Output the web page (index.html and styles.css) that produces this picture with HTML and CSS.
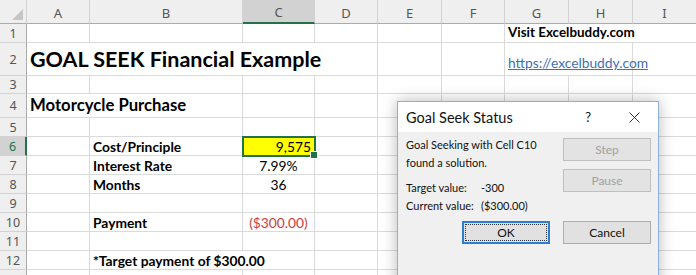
FILE: index.html
```html
<!DOCTYPE html>
<html lang="en">
  <head>
    <meta charset="UTF-8" />
    <title>Goal Seek Financial Example</title>
    <link rel="stylesheet" href="styles.css">
  </head>
  <body>
    <!-- Worksheet -->
    <div class="sheet">
      <!-- column headers -->
      <div class="hd corner"><span class="tri"></span></div>
      <div class="hd">A</div><div class="hd">B</div><div class="hd col-sel">C</div><div class="hd">D</div>
      <div class="hd">E</div><div class="hd">F</div><div class="hd">G</div><div class="hd">H</div><div class="hd">I</div>

      <!-- row 1 -->
      <div class="rn">1</div>
      <div class="cell"></div><div class="cell"></div><div class="cell"></div><div class="cell"></div><div class="cell"></div><div class="cell"></div>
      <div class="cell span3 bold visit">Visit Excelbuddy.com</div>

      <!-- row 2 -->
      <div class="rn">2</div>
      <div class="cell span4 title">GOAL SEEK Financial Example</div>
      <div class="cell"></div><div class="cell"></div>
      <div class="cell span2 link"><a href="#">https://excelbuddy.com</a></div>
      <div class="cell"></div>

      <!-- row 3 -->
      <div class="rn">3</div>
      <div class="cell"></div><div class="cell"></div><div class="cell"></div><div class="cell"></div><div class="cell"></div>
      <div class="cell"></div><div class="cell"></div><div class="cell"></div><div class="cell"></div>

      <!-- row 4 -->
      <div class="rn">4</div>
      <div class="cell span2 subtitle">Motorcycle Purchase</div>
      <div class="cell"></div><div class="cell"></div><div class="cell"></div><div class="cell"></div>
      <div class="cell"></div><div class="cell"></div><div class="cell"></div>

      <!-- row 5 -->
      <div class="rn">5</div>
      <div class="cell"></div><div class="cell"></div><div class="cell"></div><div class="cell"></div><div class="cell"></div>
      <div class="cell"></div><div class="cell"></div><div class="cell"></div><div class="cell"></div>

      <!-- row 6 -->
      <div class="rn row-sel">6</div>
      <div class="cell"></div><div class="cell bold">Cost/Principle</div><div class="cell num active">9,575</div>
      <div class="cell"></div><div class="cell"></div><div class="cell"></div><div class="cell"></div><div class="cell"></div><div class="cell"></div>

      <!-- row 7 -->
      <div class="rn">7</div>
      <div class="cell"></div><div class="cell bold">Interest Rate</div><div class="cell mid">7.99%</div>
      <div class="cell"></div><div class="cell"></div><div class="cell"></div><div class="cell"></div><div class="cell"></div><div class="cell"></div>

      <!-- row 8 -->
      <div class="rn">8</div>
      <div class="cell"></div><div class="cell bold">Months</div><div class="cell mid">36</div>
      <div class="cell"></div><div class="cell"></div><div class="cell"></div><div class="cell"></div><div class="cell"></div><div class="cell"></div>

      <!-- row 9 -->
      <div class="rn">9</div>
      <div class="cell"></div><div class="cell"></div><div class="cell"></div><div class="cell"></div><div class="cell"></div>
      <div class="cell"></div><div class="cell"></div><div class="cell"></div><div class="cell"></div>

      <!-- row 10 -->
      <div class="rn">10</div>
      <div class="cell"></div><div class="cell bold">Payment</div><div class="cell mid neg">($300.00)</div>
      <div class="cell"></div><div class="cell"></div><div class="cell"></div><div class="cell"></div><div class="cell"></div><div class="cell"></div>

      <!-- row 11 -->
      <div class="rn">11</div>
      <div class="cell"></div><div class="cell"></div><div class="cell"></div><div class="cell"></div><div class="cell"></div>
      <div class="cell"></div><div class="cell"></div><div class="cell"></div><div class="cell"></div>

      <!-- row 12 -->
      <div class="rn">12</div>
      <div class="cell"></div><div class="cell span2 bold">*Target payment of $300.00</div>
      <div class="cell"></div><div class="cell"></div><div class="cell"></div><div class="cell"></div><div class="cell"></div><div class="cell"></div>

      <!-- row 13 (only its top edge shows) -->
      <div class="rn"></div>
      <div class="cell"></div><div class="cell"></div><div class="cell"></div><div class="cell"></div><div class="cell"></div>
      <div class="cell"></div><div class="cell"></div><div class="cell"></div><div class="cell"></div>
    </div>

    <!-- Goal Seek Status dialog -->
    <div class="dialog">
      <div class="dlg-title">
        <span class="dlg-name">Goal Seek Status</span>
        <span class="dlg-help">?</span>
        <svg class="dlg-close" width="11" height="11" viewBox="0 0 11 11">
          <path d="M0.5 0.5 L10.5 10.5 M10.5 0.5 L0.5 10.5" stroke="#333" stroke-width="1" fill="none" />
        </svg>
      </div>
      <div class="dlg-body">
        <div class="dlg-info">
          <p>Goal Seeking with Cell C10<br>found a solution.</p>
          <div class="dlg-values">
            <span>Target value:</span><span>-300</span>
            <span>Current value:</span><span>($300.00)</span>
          </div>
        </div>
        <div class="dlg-side">
          <button class="dbtn" disabled>Step</button>
          <button class="dbtn" disabled>Pause</button>
        </div>
      </div>
      <div class="dlg-foot">
        <button class="dbtn default"><span>OK</span></button>
        <button class="dbtn">Cancel</button>
      </div>
    </div>
  </body>
</html>
```

FILE: styles.css
```css
* {
  margin: 0;
  padding: 0;
  box-sizing: border-box;
}

body {
  position: relative;
  width: 696px;
  height: 275px;
  overflow: hidden;
  background-color: #fff;
  font-family: "Lato", "Liberation Sans", sans-serif;
  color: #000;
}

/* Worksheet grid */
.sheet {
  display: grid;
  grid-template-columns: 27px 63px 153px 72px 63px 64px 63px 64px 64px 64px;
  grid-template-rows: 24px 19px 33px 18px 24px repeat(9, 19px);
  width: 757px;
}

.cell {
  display: flex;
  align-items: flex-end;
  padding: 0 3px 1px;
  border-right: 1px solid #dadada;
  border-bottom: 1px solid #dadada;
  font-size: 13.8px;
  line-height: 15px;
  white-space: nowrap;
}

.span2 { grid-column: span 2; }
.span3 { grid-column: span 3; }
.span4 { grid-column: span 4; }

.hd,
.rn {
  display: flex;
  align-items: center;
  justify-content: center;
  background-color: #efefef;
  color: #555;
  font-family: "Noto Sans", "Open Sans", sans-serif;
  font-size: 13px;
}

.hd {
  padding-top: 2px;
  border-right: 1px solid #d2d2d2;
  border-bottom: 1px solid #ababab;
}

.rn {
  font-size: 12.5px;
  border-right: 1px solid #ababab;
  border-bottom: 1px solid #d2d2d2;
}

.corner {
  position: relative;
}

.tri {
  position: absolute;
  right: 3px;
  bottom: 3px;
  width: 0;
  height: 0;
  border-left: 11px solid transparent;
  border-bottom: 11px solid #c6c6c6;
}

.col-sel {
  background-color: #d2d2d2;
  border-bottom: 2px solid #217346;
}

.row-sel {
  background-color: #d2d2d2;
  color: #217346;
  border-right: 2px solid #217346;
}

.bold { font-weight: bold; }

.title {
  font-weight: bold;
  font-size: 21.5px;
  line-height: 24px;
  padding-bottom: 4px;
}

.subtitle {
  font-weight: bold;
  font-size: 16.7px;
  line-height: 19px;
  padding-bottom: 2px;
}

.visit {
  font-size: 13.4px;
  padding-bottom: 2px;
}

.link {
  padding-bottom: 5px;
}

.link a {
  color: #4070b8;
  font-size: 13.8px;
  text-decoration: underline;
}

.num { justify-content: flex-end; }
.mid { justify-content: center; }
.neg { color: #d03c3c; }

.active {
  position: relative;
  background-color: #ffff00;
  outline: 2px solid #217346;
  outline-offset: -1px;
}

.active::after {
  content: "";
  position: absolute;
  right: -4px;
  bottom: -4px;
  width: 6px;
  height: 6px;
  background-color: #217346;
  border: 1px solid #fff;
}

/* Dialog */
.dialog {
  position: absolute;
  left: 397px;
  top: 101px;
  width: 262px;
  height: 190px;
  background-color: #f0f0f0;
  border: 1px solid #8fb1d8;
  box-shadow: 0 0 14px rgba(0, 0, 0, 0.28);
  font-family: "Lato", "Liberation Sans", sans-serif;
  font-size: 11px;
  color: #111;
}

.dlg-title {
  display: flex;
  align-items: center;
  height: 30px;
  padding-left: 8px;
  background-color: #fff;
}

.dlg-name {
  flex: 1;
  font-size: 14.5px;
  padding-top: 1px;
}

.dlg-help {
  font-size: 13px;
  margin-right: 38px;
}

.dlg-close {
  margin-right: 18px;
}

.dlg-body {
  display: flex;
  justify-content: space-between;
  padding: 4px 7px 0 8px;
}

.dlg-info p {
  line-height: 18px;
}

.dlg-values {
  display: grid;
  grid-template-columns: 75px auto;
  line-height: 18px;
  margin-top: 7px;
}

.dlg-side {
  display: flex;
  flex-direction: column;
  gap: 8px;
  padding-top: 2px;
}

.dbtn {
  width: 88px;
  height: 23px;
  background-color: #e1e1e1;
  border: 1px solid #adadad;
  font-family: inherit;
  font-size: 12px;
  color: #111;
}

.dbtn:disabled {
  background-color: #e3e3e3;
  border-color: #bfbfbf;
  color: #a0a0a0;
}

.dlg-foot {
  display: flex;
  justify-content: flex-end;
  gap: 13px;
  padding: 6px 7px 0 0;
}

.dbtn.default {
  border: 2px solid #2a7fd4;
  padding: 1px;
}

.dbtn.default span {
  display: block;
  height: 100%;
  line-height: 15px;
  border: 1px dotted #333;
}
```
